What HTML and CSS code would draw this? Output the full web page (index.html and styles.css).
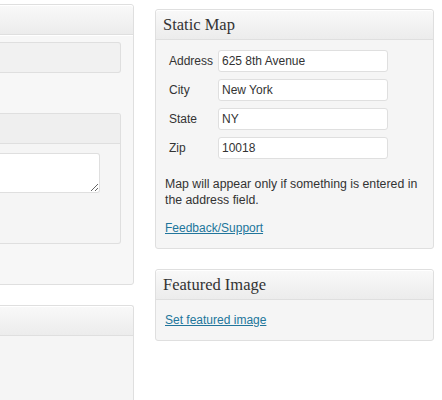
FILE: index.html
```html
<!DOCTYPE html>
<html>
<head>
<meta charset="utf-8">
<link rel="stylesheet" href="styles.css">
</head>
<body>
<div class="wrap">
  <div class="col-left">
    <div class="postbox lbox1">
      <div class="hndle"></div>
      <div class="inside">
        <div class="subbox plain"></div>
        <div class="subbox">
          <div class="hndle"></div>
          <div class="sub-inside"><textarea class="ta"></textarea></div>
        </div>
      </div>
    </div>
    <div class="postbox lbox2">
      <div class="hndle"></div>
      <div class="inside tall"></div>
    </div>
  </div>
  <div class="col-right">
    <div class="postbox">
      <h3 class="hndle title">Static Map</h3>
      <div class="inside map">
        <div class="rows">
          <div class="row"><label class="lbl">Address</label><input class="field" type="text" value="625 8th Avenue"></div>
          <div class="row"><label class="lbl">City</label><input class="field" type="text" value="New York"></div>
          <div class="row"><label class="lbl">State</label><input class="field" type="text" value="NY"></div>
          <div class="row"><label class="lbl">Zip</label><input class="field" type="text" value="10018"></div>
        </div>
        <p class="note">Map will appear only if something is entered in the address field.</p>
        <p class="linkp"><a href="#" class="link">Feedback/Support</a></p>
      </div>
    </div>
    <div class="postbox featured">
      <h3 class="hndle title">Featured Image</h3>
      <div class="inside feat">
        <a href="#" class="link">Set featured image</a>
      </div>
    </div>
  </div>
</div>
</body>
</html>
```

FILE: styles.css
```css
html, body {
  margin: 0;
  padding: 0;
  background: #ffffff;
}
html {
  overflow: hidden;
}
body {
  font-family: "Liberation Sans", Arial, sans-serif;
  font-size: 12px;
  color: #333333;
  overflow: hidden;
  height: 400px;
}
.wrap {
  display: flex;
  align-items: flex-start;
  gap: 21px;
  width: 442px;
}
.col-left {
  flex: 0 0 auto;
  width: 184px;
  margin-left: -50px;
  padding-top: 4px;
}
.col-right {
  flex: 0 0 auto;
  width: 279px;
  padding-top: 9px;
}
.postbox {
  border: 1px solid #dfdfdf;
  border-radius: 3px;
  background: #f5f5f5;
  box-sizing: border-box;
}
.hndle {
  margin: 0;
  height: 29px;
  border-bottom: 1px solid #dfdfdf;
  background: linear-gradient(to bottom, #f9f9f9, #ececec);
  border-radius: 3px 3px 0 0;
  box-shadow: inset 0 1px 0 #ffffff;
}
.title {
  font-family: "Liberation Serif", Georgia, serif;
  font-weight: normal;
  font-size: 16.5px;
  line-height: 29px;
  padding-left: 7px;
  color: #333333;
}
.lbox1 {
  background: #f7f7f7;
}
.lbox1 .inside {
  padding: 6px 12px 40px 0;
  border-top: 1px solid #ffffff;
}
.subbox {
  border: 1px solid #dfdfdf;
  border-left: none;
  border-radius: 0 3px 3px 0;
  background: #f5f5f5;
}
.subbox.plain {
  height: 29px;
  background: #f1f1f1;
  margin-bottom: 40px;
}
.subbox .hndle {
  background: #efefef;
  box-shadow: none;
  border-radius: 0 3px 0 0;
}
.sub-inside {
  padding: 9px 20px 50px 0;
}
.ta {
  display: block;
  width: 100%;
  height: 40px;
  box-sizing: border-box;
  border: 1px solid #dfdfdf;
  border-left: none;
  border-radius: 0 3px 3px 0;
  background: #ffffff;
  margin: 0;
  padding: 0;
}
.lbox2 {
  margin-top: 20px;
  height: 95px;
  border-bottom: none;
  border-radius: 3px 3px 0 0;
}
.inside.tall {
  height: 64px;
}
.inside.map {
  padding: 10px 9px 12px 9px;
}
.rows {
  display: flex;
  flex-direction: column;
  gap: 7px;
}
.row {
  display: flex;
  align-items: center;
  height: 22px;
  padding-left: 4px;
}
.lbl {
  width: 49px;
  flex: 0 0 auto;
  font-size: 12px;
}
.field {
  width: 170px;
  height: 22px;
  box-sizing: border-box;
  border: 1px solid #dfdfdf;
  border-radius: 3px;
  background: #ffffff;
  padding: 0 3px;
  margin: 0;
  font-family: "Liberation Sans", Arial, sans-serif;
  font-size: 12px;
  color: #333333;
  outline: none;
}
.note {
  margin: 17px 0 0 0;
  line-height: 16px;
  font-size: 12.3px;
}
.linkp {
  margin: 12px 0 0 0;
  line-height: 16px;
}
.link {
  color: #21759b;
  text-decoration: underline;
  font-size: 12px;
}
.featured {
  margin-top: 20px;
}
.inside.feat {
  padding: 12px 9px 12px 9px;
  line-height: 16px;
}
```
